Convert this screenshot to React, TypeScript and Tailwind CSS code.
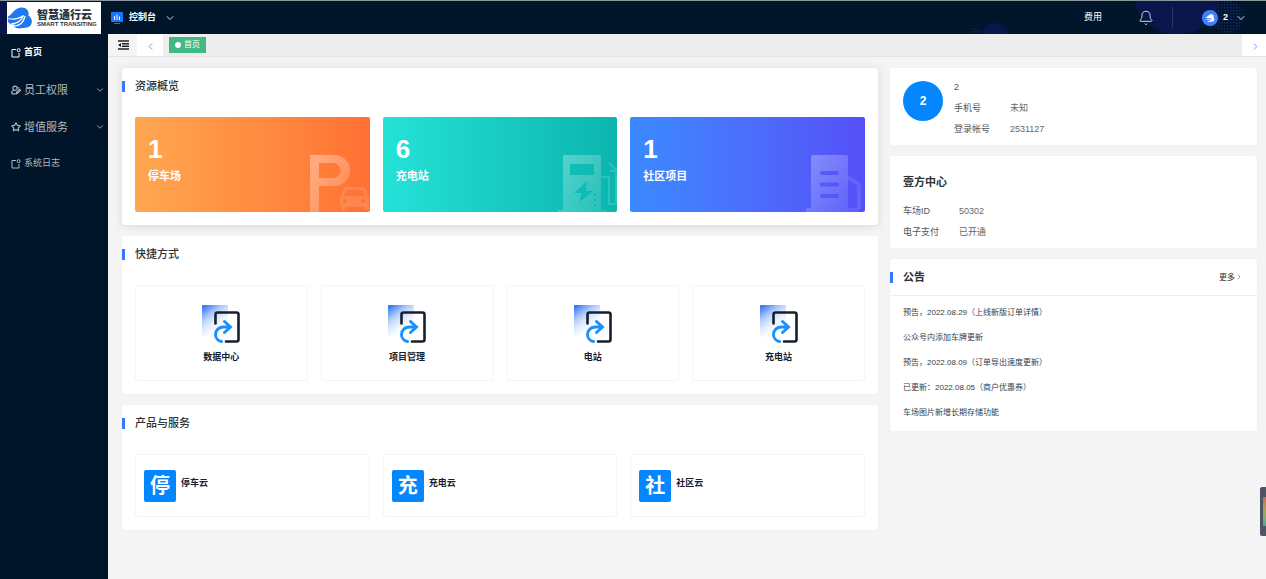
// App.tsx
import type { ReactNode } from "react";
import { Bell, ChevronDown, ChevronLeft, ChevronRight, Star } from "lucide-react";

function ExportIcon() {
  return (
    <svg viewBox="0 0 10 10" className="size-[10px] shrink-0" fill="none" stroke="currentColor">
      <path d="M5 1.500H1v7.500h7V5" />
      <circle cx="7.6" cy="2.2" r="1.5" />
    </svg>
  );
}

function StaffIcon() {
  return (
    <svg viewBox="0 0 10 10" className="size-[10px] shrink-0" fill="none" stroke="currentColor" strokeWidth="1.2">
      <circle cx="4" cy="3.2" r="2.1" />
      <path d="M.8 8.800V7.400C.8 6.200 1.700 5.500 3 5.500M.8 8.800h3.700" />
      <path d="m5.200 8.800.3-1.500 3-3 1 1-3 3zM7 2.500l1.200.8" />
    </svg>
  );
}

function LogoMark() {
  return (
    <svg viewBox="0 0 26 24" className="h-6 w-[26px] shrink-0" fill="none" strokeLinecap="round">
      <path
        d="M1 10.500C5 9 7 2 14 1.500c5-.3 8.500 3 7.500 8 3 2 4 5 3 8-1 3.500-5 4.500-9 4.500-3 .8-6 .8-8.500-1.500l1-2c-3 .5-6-.5-7.500-4l1-1c-.7-1-1-2-.5-3z"
        fill="#1d79f2"
      />
      <path d="M2 12.500c5 1.500 11 0 14.500-3-2 5-6 8-12 8.500M8 20c5-.5 8.500-4 10-9.500" stroke="#fff" strokeWidth="1.300" />
    </svg>
  );
}

function ParkingArt() {
  return (
    <svg viewBox="0 0 62 58" className="absolute right-0 bottom-0 h-[58px] w-[62px]">
      <defs>
        <linearGradient id="parking" x1="0" y1="0" x2="1" y2="1">
          <stop offset="0" stopColor="#fff" stopOpacity=".38" />
          <stop offset="1" stopColor="#fff" stopOpacity=".12" />
        </linearGradient>
      </defs>
      <path
        d="M2 1h24.500a15.500 15.500 0 0 1 0 31H11v26H2zM11 9v15h14a7.500 7.500 0 0 0 0-15z"
        fill="url(#parking)"
        fillRule="evenodd"
      />
      <path
        d="M37 33h18q2 0 3 3l2 6q1 1 1 3v11h-4v-3H37v3h-3v-3q-2-1-2-4v-4q0-3 2-5l1-4q1-3 2-3zm1 3-2 6h21l-2-6zm-1 9a2 2 0 1 0 0 4 2 2 0 0 0 0-4zm18 0a2 2 0 1 0 0 4 2 2 0 0 0 0-4z"
        fill="#fff"
        fillOpacity=".13"
        fillRule="evenodd"
      />
    </svg>
  );
}

function ChargerArt() {
  return (
    <svg viewBox="0 0 62 58" className="absolute right-0 bottom-0 h-[58px] w-[62px]">
      <defs>
        <linearGradient id="charger" x1="0" y1="0" x2="1" y2="1">
          <stop offset="0" stopColor="#fff" stopOpacity=".3" />
          <stop offset="1" stopColor="#fff" stopOpacity=".1" />
        </linearGradient>
      </defs>
      <path
        d="M9 1h36q1 0 1 1v54h6v2H3v-2h5V2q0-1 1-1zm6 9v11h24V10zm17 17L19 39h7l-1 9 13-11h-7zM39 40v2h2v-2zm0 5v2h2v-2zm0 5v2h2v-2z"
        fill="url(#charger)"
        fillRule="evenodd"
      />
      <path d="M46 23h8v27h7V17h-6l6-1-7-7" fill="none" stroke="#fff" strokeOpacity=".15" strokeWidth="2" />
    </svg>
  );
}

function BuildingArt() {
  return (
    <svg viewBox="0 0 62 58" className="absolute right-0 bottom-0 h-[58px] w-[62px]">
      <defs>
        <linearGradient id="building" x1="0" y1="0" x2="1" y2="1">
          <stop offset="0" stopColor="#fff" stopOpacity=".3" />
          <stop offset="1" stopColor="#fff" stopOpacity=".06" />
        </linearGradient>
      </defs>
      <path
        d="M10 1h33q2 0 2 2v51h11v4H3v-2q0-2 2-2h3V3q0-2 2-2zm9 16a2 2 0 0 0 0 4h15a2 2 0 0 0 0-4zm0 11.500a2 2 0 0 0 0 4h15a2 2 0 0 0 0-4zM19 40a2 2 0 0 0 0 4h15a2 2 0 0 0 0-4z"
        fill="url(#building)"
        fillRule="evenodd"
      />
      <path d="m45 23 11 8v24" fill="none" stroke="#fff" strokeOpacity=".1" strokeWidth="4" />
    </svg>
  );
}

function ShortcutIcon() {
  return (
    <svg viewBox="0 0 38 38" className="size-[38px]" fill="none" strokeLinecap="round">
      <defs>
        <linearGradient id="sheet" x1="0" y1="0" x2=".6" y2="1">
          <stop offset="0" stopColor="#2468f2" />
          <stop offset=".35" stopColor="#a9c8fc" />
          <stop offset=".95" stopColor="#fff" stopOpacity="0" />
        </linearGradient>
      </defs>
      <rect width="26" height="32" rx="1" fill="url(#sheet)" />
      <path d="M13.500 18.500v-9q0-2 2-2h19q2 0 2 2v25q0 2-2 2H24" stroke="#14202f" strokeWidth="2.600" />
      <path d="M19.500 36.500c-3.500-.5-6-3.500-6-7 0-4.500 3.500-7.500 8-7.500h6.500M22.500 16.500l6 5.500-6 5.500" stroke="#1890ff" strokeWidth="2.900" />
    </svg>
  );
}

const menu = [
  { label: "首页", icon: <ExportIcon />, style: "text-[9px] font-bold text-white" },
  { label: "员工权限", icon: <StaffIcon />, style: "text-[11px] text-[#b3b9bf]", children: true },
  {
    label: "增值服务",
    icon: <Star className="size-[10px] shrink-0" strokeWidth={2.8} />,
    style: "text-[11px] text-[#b3b9bf]",
    children: true,
  },
  { label: "系统日志", icon: <ExportIcon />, style: "text-[9px] text-[#b3b9bf]" },
];

const stats = [
  { value: 1, label: "停车场", style: "from-[#ffa750] to-[#ff7033]", art: <ParkingArt /> },
  { value: 6, label: "充电站", style: "from-[#24e2d8] to-[#0bb5ae]", art: <ChargerArt /> },
  { value: 1, label: "社区项目", style: "from-[#3a8aff] to-[#554ff8]", art: <BuildingArt /> },
];

const shortcuts = ["数据中心", "项目管理", "电站", "充电站"];
const products = ["停车云", "充电云", "社区云"];

const notices = [
  "预告，2022.08.29（上线新版订单详情）",
  "公众号内添加车牌更新",
  "预告，2022.08.09（订单导出速度更新）",
  "已更新：2022.08.05（商户优惠券）",
  "车场图片新增长期存储功能",
];

function Header() {
  return (
    <header className="relative flex h-[34px] items-center overflow-hidden border-t border-[#8b979d] bg-[#001529] text-[9px] text-white">
      <svg viewBox="0 0 300 34" className="absolute top-0 right-0 h-[34px] w-[300px]">
        <defs>
          <pattern id="dots" width="3" height="3" patternUnits="userSpaceOnUse">
            <rect width="1.500" height="1.500" fill="#12286a" />
          </pattern>
        </defs>
        <circle cx="211" cy="-9" r="43" fill="#0a164b" />
        <circle cx="29" cy="36" r="14" fill="#0a164b" />
        <path d="m2 33 8-8 8 8z" fill="url(#dots)" />
        <circle cx="262" cy="16" r="16" fill="url(#dots)" />
      </svg>
      <div className="flex h-full w-[108px] shrink-0 border-l-7 border-[#0a164b]">
        <div className="mt-px flex w-[94px] items-center gap-1 bg-white">
          <LogoMark />
          <div className="whitespace-nowrap text-[#2b3440]">
            <p className="text-[11px] leading-3 font-black">智慧通行云</p>
            <p className="text-[6px] leading-[7px] font-bold">SMART TRANSITING</p>
          </div>
        </div>
      </div>
      <button className="flex items-center gap-[6px] pl-[3px] font-bold">
        <svg viewBox="0 0 12 12" className="size-3">
          <rect width="12" height="10" rx="1" fill="#1677ff" />
          <path d="M3.500 4v4M6 2.500V8m2.500-3.500V8" stroke="#fff" />
          <path d="M3 11.500h6" stroke="#1677ff" />
        </svg>
        控制台
        <ChevronDown className="ml-[2px] size-3 text-gray-300" />
      </button>
      <div className="relative ml-auto flex h-full items-center">
        <a href="#fee">费用</a>
        <button aria-label="消息" className="ml-9">
          <Bell className="size-4 text-gray-300" strokeWidth={1.5} />
        </button>
        <span className="ml-[18px] h-[21px] w-px bg-[#2c3560]" />
        <button className="mr-[19px] ml-[29px] flex items-center gap-[5px] font-bold">
          <svg viewBox="0 0 16 16" className="size-4">
            <circle cx="8" cy="8" r="8" fill="#4080ff" />
            <path
              d="M3.500 7.500C6 7 6.500 4 9.500 4.200c2 .1 2.500 1.800 2 3.300 1.500 1.500 1 4-1.500 4.200C8.500 12 6.500 12 5.500 11c2.500 0 4-1.500 4.500-3.500C8.500 9.500 6 10.500 4 9.500c2 0 4-.7 5-2-2 .8-4 1-5.500 0z"
              fill="#fff"
            />
          </svg>
          2
          <ChevronDown className="ml-[2px] size-3 text-gray-300" />
        </button>
      </div>
    </header>
  );
}

function Sidebar() {
  return (
    <nav className="w-[108px] shrink-0 bg-[#001529]">
      {menu.map((item) => (
        <a key={item.label} href="#menu" className={`flex h-[37px] items-center gap-[3px] pt-px pr-[3px] pl-[11px] ${item.style}`}>
          {item.icon}
          {item.label}
          {item.children && <ChevronDown className="ml-auto size-[10px]" />}
        </a>
      ))}
    </nav>
  );
}

function TabBar() {
  return (
    <div className="flex h-[23px] border-b border-[#e4e4e4] bg-[#ededed]">
      <button aria-label="收起菜单" className="flex w-[29px] justify-center bg-[#f4f4f4] pt-[6px] pl-[2px]">
        <svg viewBox="0 0 11 10" className="h-[10px] w-[11px]" fill="none" stroke="#222" strokeWidth="1.500">
          <path d="M0 1h11M4 3.700h7M4 6.300h7M0 9h11" />
          <path d="m3 3-3 2 3 2z" fill="#222" stroke="none" />
        </svg>
      </button>
      <button aria-label="上一个" className="flex w-[26px] items-center justify-center bg-white pt-[3px]">
        <ChevronLeft className="size-[11px] text-[#6f8dff]" />
      </button>
      <a href="#home" className="mt-[3px] ml-[6px] flex h-4 w-[37px] items-center gap-[3px] bg-[#42b983] pl-[6px] text-[8px] text-white">
        <span className="size-[6px] rounded-full bg-white" />
        首页
      </a>
      <button aria-label="下一个" className="ml-auto flex w-6 items-center justify-center bg-white pt-[3px] pl-[3px]">
        <ChevronRight className="size-[11px] text-[#6f8dff]" />
      </button>
    </div>
  );
}

function Panel({ title, raised, children }: { title: string; raised?: boolean; children: ReactNode }) {
  return (
    <section className={`rounded-xs bg-white pb-[13px] ${raised ? "shadow-[0_1px_9px_rgba(0,0,0,0.12)]" : "shadow-[0_0_1px_#dcdfe6]"}`}>
      <div className="flex h-[49px] pt-2">
        <h2 className="flex h-5 items-center gap-[10px] text-[11px] font-medium text-[#303133]">
          <span className="h-[11px] w-[3px] bg-[#3577ff]" />
          {title}
        </h2>
      </div>
      <div className="px-[13px]">{children}</div>
    </section>
  );
}

function InfoRow({ label, value }: { label: string; value: string }) {
  return (
    <div className="flex">
      <dt className="w-14 text-[#555]">{label}</dt>
      <dd className="text-[#666]">{value}</dd>
    </div>
  );
}

export default function App() {
  return (
    <div className="flex min-h-screen flex-col bg-[#f4f4f4] font-['Liberation_Sans','Noto_Sans_CJK_SC',sans-serif]">
      <Header />
      <div className="flex flex-1">
        <Sidebar />
        <div className="min-w-0 flex-1">
          <TabBar />
          <main className="grid grid-cols-[1fr_367px] items-start gap-3 pt-[11px] pr-[9px] pl-[14px]">
            <div className="flex flex-col gap-[11px]">
              <Panel title="资源概览" raised>
                <div className="grid grid-cols-3 gap-[13px]">
                  {stats.map((stat) => (
                    <div key={stat.label} className={`relative h-[95px] overflow-hidden rounded-xs bg-linear-to-r pt-4 pl-[13px] font-bold text-white ${stat.style}`}>
                      <p className="text-[26px] leading-8">{stat.value}</p>
                      <p className="text-[11px] leading-[22px]">{stat.label}</p>
                      {stat.art}
                    </div>
                  ))}
                </div>
              </Panel>
              <Panel title="快捷方式">
                <div className="grid grid-cols-4 gap-[13px]">
                  {shortcuts.map((label) => (
                    <a key={label} href="#shortcut" className="flex h-24 flex-col items-center gap-[7px] rounded-xs border border-[#f5f5f5] pt-[19px] text-[9px] leading-[14px] font-bold text-[#14202f]">
                      <ShortcutIcon />
                      {label}
                    </a>
                  ))}
                </div>
              </Panel>
              <Panel title="产品与服务">
                <div className="grid grid-cols-3 gap-[13px]">
                  {products.map((label) => (
                    <a key={label} href="#product" className="flex h-[63px] items-start gap-[5px] rounded-xs border border-[#f5f5f5] pt-[15px] pl-2 text-[9px] leading-[26px] font-bold text-[#14202f]">
                      <span className="size-8 rounded-xs bg-[#0486fe] text-center text-[20px] leading-8 text-white">{label[0]}</span>
                      {label}
                    </a>
                  ))}
                </div>
              </Panel>
            </div>

            <aside className="flex flex-col gap-[11px] text-[9px] leading-[21px]">
              <section className="flex gap-[11px] rounded-xs bg-white pt-[9px] pb-[5px] pl-[13px] shadow-[0_0_1px_#dcdfe6]">
                <span className="mt-1 size-10 rounded-full bg-[#0486fe] text-center text-[12px] leading-10 font-bold text-white">2</span>
                <div>
                  <p className="text-[#555]">2</p>
                  <dl>
                    <InfoRow label="手机号" value="未知" />
                    <InfoRow label="登录帐号" value="2531127" />
                  </dl>
                </div>
              </section>
              <section className="rounded-xs bg-white px-[13px] pt-[17px] pb-[5px] shadow-[0_0_1px_#dcdfe6]">
                <h2 className="mb-[10px] text-[11px] leading-[18px] font-bold text-[#303133]">壹方中心</h2>
                <dl>
                  <InfoRow label="车场ID" value="50302" />
                  <InfoRow label="电子支付" value="已开通" />
                </dl>
              </section>
              <section className="rounded-xs bg-white pb-[6px] text-[8px] shadow-[0_0_1px_#dcdfe6]">
                <div className="flex h-[37px] items-center justify-between border-b border-[#ebeef5] pr-[14px]">
                  <h2 className="flex items-center gap-[10px] text-[11px] font-bold text-[#303133]">
                    <span className="h-[11px] w-[3px] bg-[#3577ff]" />
                    公告
                  </h2>
                  <a href="#more" className="flex items-center text-[#303133]">
                    更多
                    <ChevronRight className="size-2 text-gray-500" />
                  </a>
                </div>
                <ul className="px-[13px] pt-1 leading-[25px] text-[#333d4d]">
                  {notices.map((notice) => (
                    <li key={notice}>
                      <a href="#notice" className="block">{notice}</a>
                    </li>
                  ))}
                </ul>
              </section>
            </aside>
          </main>
        </div>
      </div>

      {/* meter docked to the window edge */}
      <div className="fixed right-0 bottom-[43px] h-[49px] w-[6px] rounded-l-xs bg-[#4b5563] py-[10px] pl-[3px]">
        <div className="h-full bg-linear-to-b from-[#c96a5a] via-[#a3a85a] to-[#3fae92]" />
      </div>
    </div>
  );
}
